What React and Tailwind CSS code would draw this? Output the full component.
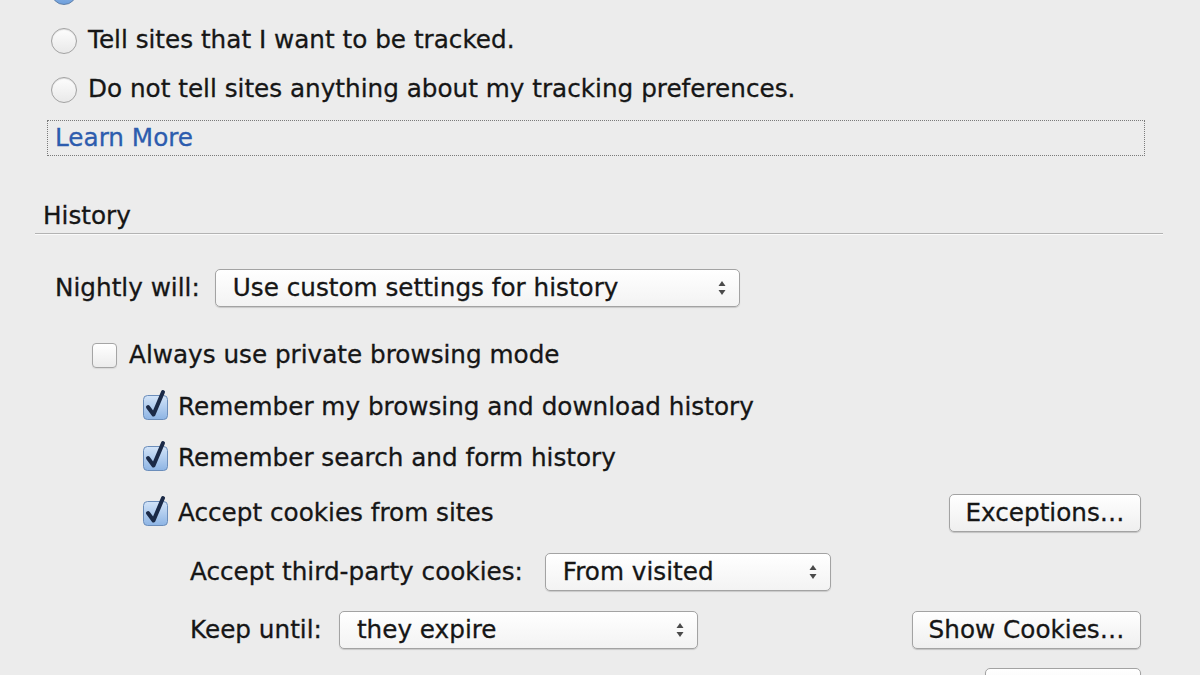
import React from "react";

function Arrows() {
  return (
    <svg width="10" height="16" viewBox="0 0 10 16" aria-hidden="true">
      <path d="M5 1L8.5 6H1.5Z" fill="#4a4a4a" />
      <path d="M5 15L8.5 10H1.5Z" fill="#4a4a4a" />
    </svg>
  );
}

function Radio({ selected }) {
  if (selected) {
    return (
      <span className="flex h-[26px] w-[26px] shrink-0 items-center justify-center rounded-full border border-[#5d7ea8] bg-gradient-to-b from-[#b9d3f1] to-[#6e9fdc]">
        <span className="h-[9px] w-[9px] rounded-full bg-[#1d2b45]" />
      </span>
    );
  }
  return (
    <span className="h-[26px] w-[26px] shrink-0 rounded-full border border-[#a2a2a2] bg-gradient-to-b from-[#fdfdfd] to-[#e9e9e9] shadow-[inset_0_1px_1px_rgba(0,0,0,0.12)]" />
  );
}

function Checkbox({ checked }) {
  if (!checked) {
    return (
      <span className="h-[25px] w-[25px] shrink-0 rounded-[4px] border border-[#a5a5a5] bg-gradient-to-b from-[#ffffff] to-[#ececec] shadow-[0_1px_1px_rgba(0,0,0,0.08)]" />
    );
  }
  return (
    <svg width="25" height="25" viewBox="0 0 25 25" className="shrink-0 overflow-visible" aria-hidden="true">
      <defs>
        <linearGradient id="cbfill" x1="0" y1="0" x2="0" y2="1">
          <stop offset="0" stopColor="#d3e4f8" />
          <stop offset="1" stopColor="#8db4e4" />
        </linearGradient>
      </defs>
      <rect x="0.5" y="0.5" width="24" height="24" rx="4" fill="url(#cbfill)" stroke="#6b8dba" />
      <path d="M5 12L10.5 19.5L20 -3" fill="none" stroke="#1b2a47" strokeWidth="4" strokeLinecap="round" strokeLinejoin="round" />
    </svg>
  );
}

function Select({ value, width }) {
  return (
    <div
      className={`flex h-[38px] shrink-0 items-center justify-between rounded-[5px] border border-[#a3a3a3] bg-gradient-to-b from-[#ffffff] to-[#f3f3f3] pl-[17px] pr-[12px] shadow-[0_1px_1px_rgba(0,0,0,0.15)] ${width}`}
    >
      <span>{value}</span>
      <Arrows />
    </div>
  );
}

function Button({ label, width }) {
  return (
    <div
      className={`ml-auto flex h-[38px] shrink-0 items-center justify-center rounded-[5px] border border-[#a3a3a3] bg-gradient-to-b from-[#ffffff] to-[#efefef] shadow-[0_1px_1px_rgba(0,0,0,0.18)] ${width}`}
    >
      {label}
    </div>
  );
}

export default function App() {
  return (
    <div className="h-[675px] w-[1200px] overflow-hidden bg-[#ececec] font-['DejaVu_Sans',sans-serif] text-[24.7px] leading-none text-[#161616] [-webkit-text-stroke:0.3px_currentColor]">
      {/* do not track radios; the first one is scrolled mostly out of view */}
      <div className="-mt-[33px] pl-[51px]">
        <div className="flex h-[49px] items-center gap-[11px]">
          <Radio selected />
        </div>
        <div className="flex h-[49px] items-center gap-[11px]">
          <Radio />
          <span>Tell sites that I want to be tracked.</span>
        </div>
        <div className="flex h-[49px] items-center gap-[11px]">
          <Radio />
          <span>Do not tell sites anything about my tracking preferences.</span>
        </div>
      </div>

      <div className="ml-[47px] mt-[6px] flex h-[36px] w-[1098px] items-center border border-dotted border-[#7a7a7a] pl-[7px] text-[#2d5cae]">
        Learn More
      </div>

      {/* history */}
      <div className="ml-[43px] mt-[45px] flex h-[30px] items-center">History</div>
      <div className="ml-[35px] mt-[2px] w-[1128px] border-b border-t border-b-[#fafafa] border-t-[#b3b3b3]" />

      <div className="mt-[34px] flex items-center gap-[15px] pl-[55px]">
        <span>Nightly will:</span>
        <Select value="Use custom settings for history" width="w-[525px]" />
      </div>

      <div className="mt-[28px] flex h-[40px] items-center gap-[12px] pl-[92px]">
        <Checkbox />
        <span>Always use private browsing mode</span>
      </div>

      <div className="mt-[12px] flex h-[40px] items-center gap-[10px] pl-[143px]">
        <Checkbox checked />
        <span>Remember my browsing and download history</span>
      </div>

      <div className="mt-[11px] flex h-[40px] items-center gap-[10px] pl-[143px]">
        <Checkbox checked />
        <span>Remember search and form history</span>
      </div>

      <div className="mt-[15px] flex h-[40px] w-[1141px] items-center gap-[10px] pl-[143px]">
        <Checkbox checked />
        <span>Accept cookies from sites</span>
        <Button label="Exceptions…" width="w-[192px]" />
      </div>

      <div className="mt-[19px] flex h-[40px] items-center gap-[22px] pl-[190px]">
        <span>Accept third-party cookies:</span>
        <Select value="From visited" width="w-[286px]" />
      </div>

      <div className="mt-[18px] flex h-[40px] w-[1141px] items-center gap-[17px] pl-[190px]">
        <span>Keep until:</span>
        <Select value="they expire" width="w-[359px]" />
        <Button label="Show Cookies…" width="w-[229px]" />
      </div>

      {/* next row, only the top edge of its button is in view */}
      <div className="mt-[17px] flex h-[40px] w-[1141px] items-center pl-[143px]">
        <Button label="" width="w-[156px]" />
      </div>
    </div>
  );
}
